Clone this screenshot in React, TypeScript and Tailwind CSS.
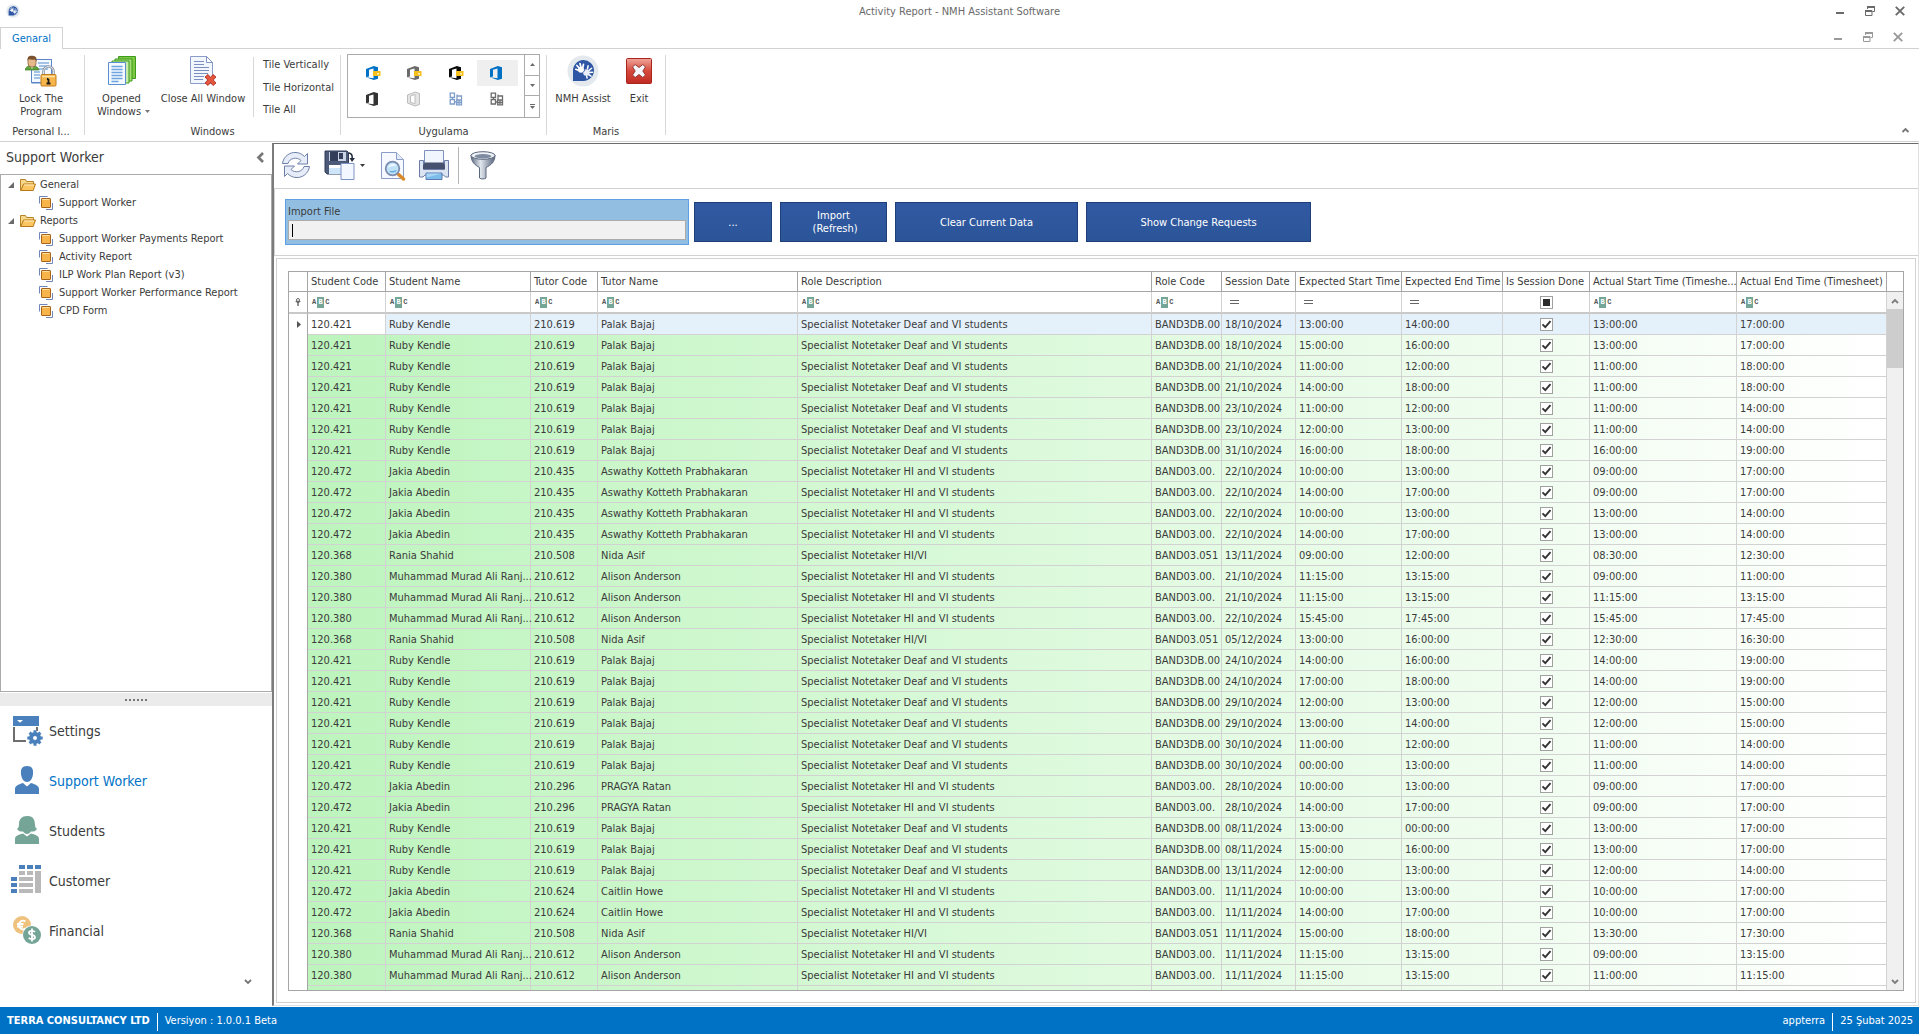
import React from "react";

type IconProps = { className?: string };

/* ---------- small window glyphs ---------- */

function AppLogo({ className }: IconProps) {
  return (
    <svg viewBox="0 0 32 32" className={className} aria-hidden="true">
      <circle cx="16" cy="16" r="15.5" fill="#e3e9ec" />
      <path d="M6 26V16a10.5 10.5 0 1 1 10.5 10Z" fill="#2e56a5" />
      <g stroke="#fff" strokeLinecap="round" fill="none">
        <path d="M12 15.500l-3.200-1.200M12.500 13.500l-2.600-3M14 12.500l-1-4M15.700 13l.8-3.700" strokeWidth="1.700" />
        <path d="M20.500 13.800l.6-3M22 15.500l2.600-2.200M22.300 17.500l3.200-.3M21.500 19.500l2.600 1.600M19.500 20.500l.6 2.500" strokeWidth="1.500" />
      </g>
      <circle cx="14" cy="14.800" r="3" fill="#fff" />
      <circle cx="19.300" cy="17.500" r="3.200" fill="#e9eef8" />
      <path d="M16.200 17.500l2-3" stroke="#2e56a5" strokeWidth=".8" />
    </svg>
  );
}

function Minimize() {
  return (
    <svg viewBox="0 0 10 10" className="size-2.5" aria-hidden="true">
      <path d="M1 7h8" stroke="currentColor" strokeWidth="2" />
    </svg>
  );
}

function Restore() {
  return (
    <svg viewBox="0 0 10 10" className="size-2.5" aria-hidden="true">
      <path d="M2.500 3V.500h7v5H7.500" fill="none" stroke="currentColor" />
      <path d="M2 1h8M0 5h7" stroke="currentColor" strokeWidth="2" />
      <path d="M.5 4.500h6.500v5H.5Z" fill="none" stroke="currentColor" />
    </svg>
  );
}

function Close() {
  return (
    <svg viewBox="0 0 10 10" className="size-2.5" aria-hidden="true">
      <path d="M.8.800l8.400 8.400M9.200.800L.8 9.200" stroke="currentColor" strokeWidth="1.900" />
    </svg>
  );
}

function Chevron({ className }: IconProps) {
  return (
    <svg viewBox="0 0 8 6" className={className} aria-hidden="true">
      <path d="M1 5l3-3 3 3" fill="none" stroke="currentColor" strokeWidth="1.800" />
    </svg>
  );
}

function Caret({ className }: IconProps) {
  return (
    <svg viewBox="0 0 5 3" className={className} aria-hidden="true">
      <path d="M0 0h5L2.500 3Z" fill="currentColor" />
    </svg>
  );
}

/* ---------- ribbon icons ---------- */

function LockProgramIcon() {
  return (
    <svg viewBox="0 0 32 32" className="size-8" aria-hidden="true">
      <path d="M6.500 4.500h20v14M6.500 14v14h10" fill="#fff" stroke="#5a86c8" />
      <path d="M6.500 4.500h20v23h-20Z" fill="#f4f9ff" stroke="#5a86c8" />
      <path d="M13 8h11M14 11h10M14 14h9M9 17h6M9 20h6M9 23h6" stroke="#87b0de" strokeWidth="1.300" />
      <path d="M0 15c1-4 4-4 6.500-4S13 11 14 15Z" fill="#5fa33c" stroke="#3e7a25" strokeWidth=".7" />
      <path d="M5 11l2 3 2-3Z" fill="#d7f0c6" />
      <rect x="3" y="2" width="8" height="10" rx="3.500" fill="#e6b98a" stroke="#7a5432" strokeWidth=".7" />
      <path d="M2.500 6C2 1 5 .5 7.500 .8 11 1 12 3 11.500 6.500L10 4.500C7 5 5 4.500 3.500 4Z" fill="#7b5230" />
      <path d="M18.500 20v-3.500a5 5 0 0 1 10 0V20" fill="none" stroke="#8d97a5" strokeWidth="2.600" />
      <path d="M18.500 20v-3.500a5 5 0 0 1 10 0V20" fill="none" stroke="#dfe5ec" strokeWidth="1" />
      <rect x="16" y="19.500" width="15" height="11.500" rx="1" fill="#f7b64c" stroke="#c07c1e" />
      <path d="M17 21.500h13" stroke="#ffe3a6" strokeWidth="1.500" />
      <path d="M23.500 24v4.500M21.500 28.500h4M22 24h1.500" stroke="#1b1b1b" strokeWidth="1.800" fill="none" />
    </svg>
  );
}

function OpenedWindowsIcon() {
  return (
    <svg viewBox="0 0 32 32" className="size-8" aria-hidden="true">
      <path d="M12.500 1.500h17v22h-17Z" fill="#7cc843" stroke="#3d9a1c" />
      <path d="M9 4h17v22H9Z" fill="#a5dc77" stroke="#3d9a1c" />
      <path d="M6 6h17v22H6Z" fill="#c9ecab" stroke="#3d9a1c" />
      <path d="M2.500 7.500h17v22h-17Z" fill="#f3f9ff" stroke="#5a8fd0" />
      <path d="M5.500 11.500h11M5.500 14.500h11M5.500 17.500h11M5.500 20.500h11M5.500 23.500h11M5.500 26.500h7" stroke="#6ea4df" strokeWidth="1.300" />
    </svg>
  );
}

function CloseAllIcon() {
  return (
    <svg viewBox="0 0 32 32" className="size-8" aria-hidden="true">
      <path d="M3.500 1.500h16l6 6v21h-22Z" fill="#f2f6fd" stroke="#8b9cc9" />
      <path d="M19.500 1.500l6 6h-6Z" fill="#fff" stroke="#7e92c6" />
      <path d="M7 6.500h10M7 9.500h10M7 12.500h15M7 15.500h15M7 18.500h14M7 21.500h10M7 24.500h9" stroke="#7d8fc0" strokeWidth="1.200" />
      <path d="M18 22l3-2.500 2.500 3 2.500-3L29 22l-2.800 3 2.800 3-3 2.500-2.500-3-2.500 3L18 28l2.800-3Z" fill="#e4573f" stroke="#b1301f" strokeWidth=".9" />
    </svg>
  );
}

function ExitIcon() {
  return (
    <svg viewBox="0 0 26 26" className="size-[26px]" aria-hidden="true">
      <defs>
        <linearGradient id="exitFill" x1="0" y1="0" x2="0" y2="1">
          <stop offset="0" stopColor="#f0a79c" />
          <stop offset=".5" stopColor="#d5493c" />
          <stop offset="1" stopColor="#c02a22" />
        </linearGradient>
      </defs>
      <rect x=".5" y=".5" width="25" height="25" rx="1" fill="url(#exitFill)" stroke="#a8251e" />
      <path d="M6.500 9l2.700-2.500L13 9.500l3.800-3L19.500 9l-2.700 4 2.700 4-2.700 2.500-3.800-3-3.800 3L6.500 17l2.700-4Z" fill="#f3f5fa" stroke="#8f2a26" strokeWidth=".9" />
    </svg>
  );
}

function OfficeMark({ color, badge, pale }: { color: string; badge?: boolean; pale?: boolean }) {
  return (
    <svg viewBox="0 0 16 16" className="size-4" aria-hidden="true">
      {pale ? (
        <path d="M1.500 4L9 1l4.500 1.500v11L9 15l-7.500-3Z M4.500 5v6.500L9 12.500v-9Z" fill="#e4e4e4" stroke="#b5b5b5" strokeWidth=".9" fillRule="evenodd" />
      ) : (
        <path d="M1 4L8.800 1 13 2.300v11.400L8.800 15 1 12.300l7.500 1V3.600L4 4.800v6.700L1 12.300Z" fill={color} />
      )}
      {badge && (
        <>
          <path d="M8 6h7.500v5H8Z" fill="#f8c01c" />
          <path d="M12 8h2v1.500h-2Z" fill="#fff3c4" />
        </>
      )}
    </svg>
  );
}

function TilesMark({ color }: { color: string }) {
  return (
    <svg viewBox="0 0 16 16" className="size-4" aria-hidden="true">
      <g fill="none" stroke={color} strokeWidth="1.300">
        <path d="M2.200 2.200h4.300v4.300H2.200ZM2.200 8.700h4.300v4.300H2.200ZM8.700 9h4.800v4.800H8.700ZM9 5h4.500v4H9ZM9 5V3.500" />
        <path d="M4.500 6.500v2.200M6.500 11H9M11 9v4.500M9 11.500h4.500" />
      </g>
    </svg>
  );
}

/* ---------- sidebar icons ---------- */

function FolderIcon() {
  return (
    <svg viewBox="0 0 16 14" className="h-3.5 w-4" aria-hidden="true">
      <path d="M.5 12.500V1.500h5l1 2h7v3" fill="#f7d78c" stroke="#b98325" />
      <path d="M.8 12.500L3.500 6h12l-2.300 6.500Z" fill="#fbc662" stroke="#b87718" />
      <path d="M4.200 7h9.800" stroke="#fff0c5" />
    </svg>
  );
}

function FormIcon() {
  return (
    <svg viewBox="0 0 14 14" className="size-3.5" aria-hidden="true">
      <path d="M.5 7.500v-7h8M13.500 7v6.500H7" fill="none" stroke="#6f86bd" />
      <rect x="2.500" y="2.500" width="9" height="9" rx=".5" fill="#f7b44b" stroke="#a9641c" />
      <path d="M3.500 3.500h7" stroke="#ffdf9e" />
    </svg>
  );
}

function SettingsIcon() {
  return (
    <svg viewBox="0 0 32 32" className="size-8" aria-hidden="true">
      <path d="M3 12v14h12M26 12v5" fill="none" stroke="#6e6e6e" strokeWidth="2" />
      <path d="M2 1h26v10H2Z" fill="#4a80bb" />
      <path d="M6 5h6L9 7.800Z" fill="#fff" />
      <circle cx="24" cy="23" r="7.500" fill="#fff" />
      <circle cx="24" cy="23" r="4" fill="none" stroke="#4a80bb" strokeWidth="4" />
      <path d="M24 15.300v3M24 27.700v3M16.300 23h3M28.700 23h3M18.600 17.600l2 2M27.400 26.400l2 2M29.400 17.600l-2 2M20.600 26.400l-2 2" stroke="#4a80bb" strokeWidth="3" />
    </svg>
  );
}

function PersonIcon() {
  return (
    <svg viewBox="0 0 32 32" className="size-8" aria-hidden="true">
      <path d="M16 1c5 0 6.500 3 6 8-.5 5-3 8-6 8s-5.500-3-6-8c-.5-5 1-8 6-8Z" fill="#4a80bb" />
      <path d="M4 29v-5c0-3 3-4.500 8-6l4 3.500L20 18c5 1.500 8 3 8 6v5Z" fill="#4a80bb" />
    </svg>
  );
}

function StudentIcon() {
  return (
    <svg viewBox="0 0 32 32" className="size-8" aria-hidden="true">
      <path d="M16 1c6-.5 8 4 8 9 0 2 1 3 2 4-2 3-4 2.500-6 2.500-1 1.500-2.500 2.500-4 2.500s-3-1-4-2.500c-2 0-4 .5-6-2.500 2-2 2-3 2-5 0-5 3-8 8-8Z" fill="#74a596" />
      <path d="M4 29v-5c0-3 3-4 8-5.500l4 3 4-3c5 1.500 8 2.500 8 5.500v5Z" fill="#74a596" />
    </svg>
  );
}

function CustomerIcon() {
  return (
    <svg viewBox="0 0 32 32" className="size-8" aria-hidden="true">
      <path d="M8 0h6v4H8ZM16 0h6v4h-6ZM24 0h6v4h-6ZM0 12h6v4H0ZM0 18h6v4H0ZM0 24h6v4H0Z" fill="#4a80bb" />
      <path d="M8 6h6v4H8ZM16 6h6v4h-6ZM8 12h14v4H8ZM8 18h14v4H8ZM8 24h14v4H8ZM24 6h6v22h-6Z" fill="#b9b9b9" />
    </svg>
  );
}

function FinancialIcon() {
  return (
    <svg viewBox="0 0 32 32" className="size-8" aria-hidden="true">
      <circle cx="11" cy="10" r="9" fill="#eec17c" />
      <path d="M14.500 6.500c-3.500-2-6.500 0-6.500 3.500s3 5.500 6.500 3.500M6 9h6.500M6 11.500h6" fill="none" stroke="#fff" strokeWidth="1.800" />
      <circle cx="21" cy="20" r="9.800" fill="#fff" />
      <circle cx="21" cy="20" r="9" fill="#74a596" />
      <path d="M24 17c-1-1.500-6-1.800-6 .7 0 2.700 6 1.700 6 4.500 0 2.500-5 2.500-6.200.6M21 13.500v13" fill="none" stroke="#fff" strokeWidth="1.800" />
    </svg>
  );
}

/* ---------- toolbar icons ---------- */

function RefreshIcon() {
  return (
    <svg viewBox="0 0 32 32" className="size-8" aria-hidden="true">
      <g fill="#e6edf8" stroke="#6f80a8" strokeWidth="1">
        <path d="M2.500 14.500c1-7 7-11.500 13.500-11 3.500.2 6.300 1.800 8.500 4l3-3v10.500H17.500l3.500-3.500C17 7.500 9.500 9 8 14.500Z" />
        <path d="M29.500 17.500c-1 7-7 11.500-13.500 11-3.500-.2-6.300-1.800-8.500-4l-3 3V17H14.500L11 20.500c4 4 11.500 2.500 13-3Z" />
      </g>
    </svg>
  );
}

function SaveIcon() {
  return (
    <svg viewBox="0 0 32 32" className="size-8" aria-hidden="true">
      <path d="M1 2h22l1.500 1.500V25H3l-2-2Z" fill="#4c5a78" stroke="#2f3b58" />
      <path d="M5 3h17v9H5Z" fill="#c9d3e6" />
      <path d="M6 3h8v9H6Z" fill="#333f5a" />
      <path d="M15 4h4v6h-4Z" fill="#333f5a" />
      <path d="M5 16h15v9H5Z" fill="#cfe6fa" />
      <path d="M5 16h15v3H5Z" fill="#fff" />
      <path d="M17 14.500h13v16H17Z" fill="#f3f7ff" stroke="#7f93c6" />
      <path d="M25 4c3 .5 3.500 3 3.200 6" fill="none" stroke="#222b3d" strokeWidth="1.600" />
      <path d="M25.500 9h5.500l-3 4Z" fill="#222b3d" />
    </svg>
  );
}

function PreviewIcon() {
  return (
    <svg viewBox="0 0 32 32" className="size-8" aria-hidden="true">
      <path d="M4.500 3.500h15l7 7v19h-22Z" fill="#f6f9ff" stroke="#8b9cc6" />
      <path d="M19.500 3.500v7h7" fill="#e3eaf7" stroke="#8b9cc6" />
      <path d="M21 25l5.500 5" stroke="#d98b2b" strokeWidth="3.400" strokeLinecap="round" />
      <circle cx="15.500" cy="19.500" r="6.800" fill="#bfe2f8" stroke="#7c8cae" strokeWidth="1.800" />
      <path d="M11 19a5 5 0 0 1 9-2c-3-.5-6 0-9 2Z" fill="#eef8ff" />
      <path d="M12 22a5 5 0 0 0 8-1c-3 1-5 1-8 1Z" fill="#5fabdf" />
    </svg>
  );
}

function PrintIcon() {
  return (
    <svg viewBox="0 0 32 32" className="size-8" aria-hidden="true">
      <path d="M1.500 11.500h4v9h21v-9h4V28h-3l-2-2H7l-2 2H1.500Z" fill="#dce4f2" stroke="#6c7ca6" />
      <path d="M6.500 1.500h19v13h-19Z" fill="#f1f5fd" stroke="#8091bb" />
      <path d="M5 17l1.500-3.500h19L27 17v3H5Z" fill="#45516e" />
      <path d="M8 24h16v6.500H8Z" fill="#7dbcea" stroke="#5b78b0" />
      <path d="M8.500 24.500h15l-15 4Z" fill="#a9d6f5" />
    </svg>
  );
}

function FunnelIcon() {
  return (
    <svg viewBox="0 0 32 32" className="size-8" aria-hidden="true">
      <defs>
        <linearGradient id="funnelFill" x1="0" y1="0" x2="1" y2="0">
          <stop offset="0" stopColor="#5d6a80" />
          <stop offset=".4" stopColor="#e1e7ee" />
          <stop offset="1" stopColor="#57637a" />
        </linearGradient>
      </defs>
      <path d="M4 6c0 7 4 10 8.500 12.500V29c1.500 1.300 5 1.300 6.500 0V18.500C24 16 28 13 28 6Z" fill="url(#funnelFill)" stroke="#5a667c" />
      <ellipse cx="16" cy="6.500" rx="12" ry="3.800" fill="#eef2f6" stroke="#5a667c" />
      <ellipse cx="16" cy="7.200" rx="8.500" ry="2.200" fill="#7e8ba0" />
    </svg>
  );
}

/* ---------- data ---------- */

const RUBY = ["120.421", "Ruby Kendle", "210.619", "Palak Bajaj", "Specialist Notetaker Deaf and VI students", "BAND3DB.00"];
const JAKIA = ["120.472", "Jakia Abedin", "210.435", "Aswathy Kotteth Prabhakaran", "Specialist Notetaker HI and VI students", "BAND03.00."];
const JAKIA_P = ["120.472", "Jakia Abedin", "210.296", "PRAGYA Ratan", "Specialist Notetaker HI and VI students", "BAND03.00."];
const JAKIA_C = ["120.472", "Jakia Abedin", "210.624", "Caitlin Howe", "Specialist Notetaker HI and VI students", "BAND03.00."];
const RANIA = ["120.368", "Rania Shahid", "210.508", "Nida Asif", "Specialist Notetaker HI/VI", "BAND03.051"];
const MURAD = ["120.380", "Muhammad Murad Ali Ranj...", "210.612", "Alison Anderson", "Specialist Notetaker HI and VI students", "BAND03.00."];
const BLANK = ["", "", "", "", "", ""];

const SESSIONS: [string[], string, string, string, string, string][] = [
  [RUBY, "18/10/2024", "13:00:00", "14:00:00", "13:00:00", "17:00:00"],
  [RUBY, "18/10/2024", "15:00:00", "16:00:00", "13:00:00", "17:00:00"],
  [RUBY, "21/10/2024", "11:00:00", "12:00:00", "11:00:00", "18:00:00"],
  [RUBY, "21/10/2024", "14:00:00", "18:00:00", "11:00:00", "18:00:00"],
  [RUBY, "23/10/2024", "11:00:00", "12:00:00", "11:00:00", "14:00:00"],
  [RUBY, "23/10/2024", "12:00:00", "13:00:00", "11:00:00", "14:00:00"],
  [RUBY, "31/10/2024", "16:00:00", "18:00:00", "16:00:00", "19:00:00"],
  [JAKIA, "22/10/2024", "10:00:00", "13:00:00", "09:00:00", "17:00:00"],
  [JAKIA, "22/10/2024", "14:00:00", "17:00:00", "09:00:00", "17:00:00"],
  [JAKIA, "22/10/2024", "10:00:00", "13:00:00", "13:00:00", "14:00:00"],
  [JAKIA, "22/10/2024", "14:00:00", "17:00:00", "13:00:00", "14:00:00"],
  [RANIA, "13/11/2024", "09:00:00", "12:00:00", "08:30:00", "12:30:00"],
  [MURAD, "21/10/2024", "11:15:00", "13:15:00", "09:00:00", "11:00:00"],
  [MURAD, "21/10/2024", "11:15:00", "13:15:00", "11:15:00", "13:15:00"],
  [MURAD, "22/10/2024", "15:45:00", "17:45:00", "15:45:00", "17:45:00"],
  [RANIA, "05/12/2024", "13:00:00", "16:00:00", "12:30:00", "16:30:00"],
  [RUBY, "24/10/2024", "14:00:00", "16:00:00", "14:00:00", "19:00:00"],
  [RUBY, "24/10/2024", "17:00:00", "18:00:00", "14:00:00", "19:00:00"],
  [RUBY, "29/10/2024", "12:00:00", "13:00:00", "12:00:00", "15:00:00"],
  [RUBY, "29/10/2024", "13:00:00", "14:00:00", "12:00:00", "15:00:00"],
  [RUBY, "30/10/2024", "11:00:00", "12:00:00", "11:00:00", "14:00:00"],
  [RUBY, "30/10/2024", "00:00:00", "13:00:00", "11:00:00", "14:00:00"],
  [JAKIA_P, "28/10/2024", "10:00:00", "13:00:00", "09:00:00", "17:00:00"],
  [JAKIA_P, "28/10/2024", "14:00:00", "17:00:00", "09:00:00", "17:00:00"],
  [RUBY, "08/11/2024", "13:00:00", "00:00:00", "13:00:00", "17:00:00"],
  [RUBY, "08/11/2024", "15:00:00", "16:00:00", "13:00:00", "17:00:00"],
  [RUBY, "13/11/2024", "12:00:00", "13:00:00", "12:00:00", "14:00:00"],
  [JAKIA_C, "11/11/2024", "10:00:00", "13:00:00", "10:00:00", "17:00:00"],
  [JAKIA_C, "11/11/2024", "14:00:00", "17:00:00", "10:00:00", "17:00:00"],
  [RANIA, "11/11/2024", "15:00:00", "18:00:00", "13:30:00", "17:30:00"],
  [MURAD, "11/11/2024", "11:15:00", "13:15:00", "09:00:00", "13:15:00"],
  [MURAD, "11/11/2024", "11:15:00", "13:15:00", "11:00:00", "11:15:00"],
  [BLANK, "", "", "", "", ""],
];

const COLUMNS: { title: string; width: string; filter: "text" | "equals" | "check" }[] = [
  { title: "Student Code", width: "w-[78px]", filter: "text" },
  { title: "Student Name", width: "w-[145px]", filter: "text" },
  { title: "Tutor Code", width: "w-[67px]", filter: "text" },
  { title: "Tutor Name", width: "w-[200px]", filter: "text" },
  { title: "Role Description", width: "w-auto", filter: "text" },
  { title: "Role Code", width: "w-[70px]", filter: "text" },
  { title: "Session Date", width: "w-[74px]", filter: "equals" },
  { title: "Expected Start Time", width: "w-[106px]", filter: "equals" },
  { title: "Expected End Time", width: "w-[101px]", filter: "equals" },
  { title: "Is Session Done", width: "w-[87px]", filter: "check" },
  { title: "Actual Start Time (Timeshe...", width: "w-[147px]", filter: "text" },
  { title: "Actual End Time (Timesheet)", width: "w-[150px]", filter: "text" },
];

/* ---------- title bar and ribbon ---------- */

function WindowButtons({ label }: { label: string }) {
  const button = "grid h-5 w-[30px] place-items-center";
  return (
    <div className="flex">
      <button aria-label={`Minimize ${label}`} className={button}><Minimize /></button>
      <button aria-label={`Restore ${label}`} className={button}><Restore /></button>
      <button aria-label={`Close ${label}`} className={button}><Close /></button>
    </div>
  );
}

function TitleBar() {
  return (
    <header className="grid h-[27px] grid-cols-[1fr_auto_1fr] items-start pt-px text-[#6a6a6a]">
      <AppLogo className="mt-[3px] ml-1.5 size-3.5" />
      <h1 className="pt-1 leading-[14px]">Activity Report - NMH Assistant Software</h1>
      <div className="flex justify-end pr-1"><WindowButtons label="application" /></div>
    </header>
  );
}

function TabStrip() {
  return (
    <div className="flex h-[22px] items-stretch border-b border-[#d2d2d2]">
      <button className="-mb-px w-[63px] border border-b-0 border-[#d2d2d2] bg-white pt-px text-[#0072c6]">Genaral</button>
      <div className="ml-auto pr-1.5 text-[#999]"><WindowButtons label="document" /></div>
    </div>
  );
}

function RibbonGroup({ caption, className, children }: { caption: string; className: string; children: React.ReactNode }) {
  return (
    <section aria-label={caption} className={`flex shrink-0 flex-col ${className}`}>
      <div className="flex flex-1 items-start">{children}</div>
      <h2 className="h-4 text-center leading-[14px]">{caption}</h2>
    </section>
  );
}

function RibbonSeparator() {
  return <div className="mt-[6px] h-20 w-px shrink-0 bg-[#d8d8d8]" />;
}

function BigButton({ icon, className, children }: { icon: React.ReactNode; className: string; children: React.ReactNode }) {
  return (
    <button className={`flex shrink-0 flex-col items-center leading-[13px] ${className}`}>
      <span className="mt-1.5 mb-[5px] grid h-8 place-items-center">{icon}</span>
      {children}
    </button>
  );
}

const SKINS: { name: string; mark: React.ReactNode; selected?: boolean }[] = [
  { name: "Colorful", mark: <OfficeMark color="#0072c6" badge /> },
  { name: "Dark gray", mark: <OfficeMark color="#6b6b6b" badge /> },
  { name: "Black", mark: <OfficeMark color="#0a0a0a" badge /> },
  { name: "White", mark: <OfficeMark color="#0072c6" />, selected: true },
  { name: "Dark", mark: <OfficeMark color="#333333" /> },
  { name: "Light gray", mark: <OfficeMark color="#b5b5b5" pale /> },
  { name: "Blue tiles", mark: <TilesMark color="#7d9cca" /> },
  { name: "Gray tiles", mark: <TilesMark color="#6b6b6b" /> },
];

function SkinGallery() {
  return (
    <div className="mt-[5px] ml-1.5 flex h-16 w-[193px] border border-[#ababab]">
      <div className="grid flex-1 grid-cols-4 content-start pt-[5px] pr-1.5 pl-1">
        {SKINS.map((skin) => (
          <button key={skin.name} aria-label={skin.name} className={`grid h-[26px] place-items-center ${skin.selected ? "bg-[#efefef]" : ""}`}>
            {skin.mark}
          </button>
        ))}
      </div>
      <div className="grid w-[15px] grid-rows-3 divide-y divide-[#ababab] border-l border-[#ababab] text-[#6a6a6a]">
        <button aria-label="Scroll up" className="grid place-items-center"><Caret className="h-[3px] w-[5px] rotate-180" /></button>
        <button aria-label="Scroll down" className="grid place-items-center"><Caret className="h-[3px] w-[5px]" /></button>
        <button aria-label="More" className="flex flex-col items-center justify-center gap-px">
          <span className="h-px w-[5px] bg-[#6a6a6a]" />
          <Caret className="h-[3px] w-[5px]" />
        </button>
      </div>
    </div>
  );
}

function Ribbon() {
  return (
    <div className="flex h-[93px] border-b border-[#d2d2d2]">
      <RibbonGroup caption="Personal I..." className="w-[84px] pr-0.5">
        <BigButton icon={<LockProgramIcon />} className="w-full">
          <span>Lock The<br />Program</span>
        </BigButton>
      </RibbonGroup>
      <RibbonSeparator />
      <RibbonGroup caption="Windows" className="w-[255px]">
        <BigButton icon={<OpenedWindowsIcon />} className="w-[73px]">
          <span>Opened</span>
          <span className="flex items-center gap-1 pl-1">Windows<Caret className="h-[3px] w-[5px] text-[#777]" /></span>
        </BigButton>
        <BigButton icon={<CloseAllIcon />} className="w-[90px]">Close All Window</BigButton>
        <div className="mt-2 ml-[5px] flex border-l border-[#d8d8d8] pl-[9px]">
          <div className="flex h-[60px] flex-col justify-between pt-px">
            <button className="text-left leading-[14px]">Tile Vertically</button>
            <button className="text-left leading-[14px]">Tile Horizontal</button>
            <button className="text-left leading-[14px]">Tile All</button>
          </div>
        </div>
      </RibbonGroup>
      <RibbonSeparator />
      <RibbonGroup caption="Uygulama" className="w-[205px]"><SkinGallery /></RibbonGroup>
      <RibbonSeparator />
      <RibbonGroup caption="Maris" className="w-[118px]">
        <BigButton icon={<AppLogo className="size-8" />} className="w-[72px]">NMH Assist</BigButton>
        <BigButton icon={<ExitIcon />} className="w-10">Exit</BigButton>
      </RibbonGroup>
      <RibbonSeparator />
      <button aria-label="Collapse ribbon" className="ml-auto self-end p-2 pr-[9px] text-[#777]"><Chevron className="h-1.5 w-[9px]" /></button>
    </div>
  );
}

/* ---------- sidebar ---------- */

const TREE = [
  { name: "General", items: ["Support Worker"] },
  {
    name: "Reports",
    items: ["Support Worker Payments Report", "Activity Report", "ILP Work Plan Report (v3)", "Support Worker Performance Report", "CPD Form"],
  },
];

const NAV = [
  { name: "Settings", icon: <SettingsIcon /> },
  { name: "Support Worker", icon: <PersonIcon />, active: true },
  { name: "Students", icon: <StudentIcon /> },
  { name: "Customer", icon: <CustomerIcon /> },
  { name: "Financial", icon: <FinancialIcon /> },
];

function Sidebar() {
  return (
    <aside className="flex w-[272px] shrink-0 flex-col">
      <div className="flex h-8 items-center justify-between pr-1 pb-0.5 pl-1.5">
        <h2 className="text-[14px]">Support Worker</h2>
        <button aria-label="Collapse panel" className="p-0.5 text-[#777]"><Chevron className="h-[9px] w-3 -rotate-90" /></button>
      </div>
      <ul className="min-h-0 flex-1 overflow-hidden border border-[#ababab] pt-px">
        {TREE.map((group) => (
          <li key={group.name}>
            <button className="flex h-[18px] items-center pl-[7px]">
              <svg viewBox="0 0 6 6" className="mr-1.5 size-1.5" aria-hidden="true"><path d="M6 0v6H0Z" fill="#6a6a6a" /></svg>
              <FolderIcon />
              <span className="pl-1">{group.name}</span>
            </button>
            <ul>
              {group.items.map((item) => (
                <li key={item}>
                  <a href="#" className="flex h-[18px] items-center gap-1.5 pl-[38px]"><FormIcon />{item}</a>
                </li>
              ))}
            </ul>
          </li>
        ))}
      </ul>
      <div className="mt-px flex h-[13px] shrink-0 items-center justify-center gap-0.5 bg-[#ebebeb]">
        {[0, 1, 2, 3, 4, 5].map((dot) => <span key={dot} className="size-0.5 bg-[#777]" />)}
      </div>
      <nav className="flex flex-col text-[14px]">
        {NAV.map((item) => (
          <a key={item.name} href="#" className={`flex h-[50px] items-center gap-1.5 pl-[11px] ${item.active ? "text-[#0072c6]" : ""}`}>
            {item.icon}{item.name}
          </a>
        ))}
      </nav>
      <button aria-label="More sections" className="mr-5 flex h-[50px] items-center self-end pt-0.5 text-[#777]">
        <Chevron className="h-1.5 w-2 rotate-180" />
      </button>
    </aside>
  );
}

/* ---------- content ---------- */

function Toolbar() {
  return (
    <div className="flex h-[45px] shrink-0 items-start border-b border-[#d2d2d2] pt-[3px] pl-1.5">
      <button aria-label="Refresh" className="mt-0.5"><RefreshIcon /></button>
      <button aria-label="Save as" className="mt-0.5 ml-3 flex items-center">
        <SaveIcon />
        <Caret className="ml-1 h-[3px] w-[5px]" />
      </button>
      <button aria-label="Preview" className="mt-0.5 ml-3"><PreviewIcon /></button>
      <button aria-label="Print" className="mt-0.5 ml-[9px]"><PrintIcon /></button>
      <span className="ml-2 h-[37px] w-px bg-[#b5b5b5]" />
      <button aria-label="Filter" className="mt-0.5 ml-2"><FunnelIcon /></button>
    </div>
  );
}

function ImportBar() {
  const button = "h-10 border border-[#1f3f78] bg-linear-to-b from-[#3159a3] to-[#2b5598] leading-[13px] text-white";
  return (
    <div className="flex h-[67px] shrink-0 items-start border-b border-l border-[#d2d2d2] pt-2.5 pl-2.5">
      <label className="block h-[46px] w-[404px] border border-[#5c9fe3] bg-[#92bfe1] px-0.5 pt-1">
        <span className="block h-4 pt-px leading-[14px]">Import File</span>
        <span className="flex h-5 items-center border border-[#ababab] bg-[#f1f1f1] pl-[3px]">
          <span className="h-[13px] w-px bg-black" />
          <input type="text" className="h-full min-w-0 flex-1 bg-transparent px-0.5 outline-none" />
        </span>
      </label>
      <button className={`mt-[3px] ml-[5px] w-[78px] ${button}`}>...</button>
      <button className={`mt-[3px] ml-2 w-[107px] ${button}`}>Import<br />&nbsp;(Refresh)</button>
      <button className={`mt-[3px] ml-2 w-[183px] ${button}`}>Clear Current Data</button>
      <button className={`mt-[3px] ml-2 w-[225px] ${button}`}>Show Change Requests</button>
    </div>
  );
}

function TextFilterMark() {
  return (
    <span className="flex h-[11px] items-center font-['Liberation_Mono'] text-[7px] leading-[11px] font-bold text-[#555]">
      A<span className="mx-px w-[7px] bg-[#74a596] text-center text-white">B</span>C
    </span>
  );
}

function CheckCell({ label }: { label: string }) {
  return (
    <label className="mx-auto grid size-[13px] place-items-center">
      <input type="checkbox" defaultChecked aria-label={label} className="size-[13px] appearance-none border border-[#a0a0a0] bg-white [grid-area:1/1]" />
      <svg viewBox="0 0 11 11" className="pointer-events-none size-[11px] [grid-area:1/1]" aria-hidden="true">
        <path d="M1.500 5.300l2.800 2.900 5.200-6" fill="none" stroke="#333" strokeWidth="1.900" />
      </svg>
    </label>
  );
}

function SessionTable() {
  return (
    <table className="w-full table-fixed border-separate border-spacing-0 leading-[14px] whitespace-nowrap">
      <colgroup>
        <col className="w-[19px]" />
        {COLUMNS.map((column) => <col key={column.title} className={column.width} />)}
      </colgroup>
      <thead>
        <tr>
          <th aria-label="Row marker" className="h-5 border-r border-b border-[#a6a6a6] p-0" />
          {COLUMNS.map((column) => (
            <th key={column.title} scope="col" className="h-5 border-r border-b border-[#a6a6a6] p-0 pl-[3px] text-left font-normal">
              {column.title}
            </th>
          ))}
        </tr>
        <tr>
          <td className="h-[22px] border-r border-b-2 border-r-[#a6a6a6] border-b-[#c9c9c9] p-0">
            <svg viewBox="0 0 6 8" className="mx-auto h-2 w-1.5" aria-hidden="true">
              <circle cx="3" cy="2" r="1.500" fill="#fff" stroke="#666" />
              <path d="M0 3h6L3.700 5v3H2.300V5Z" fill="#666" />
            </svg>
          </td>
          {COLUMNS.map((column) => (
            <td key={column.title} className="h-[22px] border-r border-b-2 border-r-[#d2d2d2] border-b-[#c9c9c9] p-0">
              {column.filter === "text" && <div className="pl-1"><TextFilterMark /></div>}
              {column.filter === "equals" && <div className="ml-2 h-1 w-[9px] border-y border-[#666]" />}
              {column.filter === "check" && (
                <label className="mx-auto grid size-[13px] place-items-center">
                  <input type="checkbox" aria-label="Filter by session done" className="size-[13px] appearance-none border border-[#a0a0a0] bg-white [grid-area:1/1]" />
                  <span className="pointer-events-none size-[7px] bg-[#2b2b2b] [grid-area:1/1]" />
                </label>
              )}
            </td>
          ))}
        </tr>
      </thead>
      <tbody>
        {SESSIONS.map(([person, date, expectedStart, expectedEnd, actualStart, actualEnd], row) => {
          const cell = "h-[21px] border-r border-b border-[#d2d2d2] p-0 pt-0.5 pl-[3px]";
          return (
            <tr key={row} className={row === 0 ? "bg-[#e4f0fa]" : "bg-linear-to-r from-[#bcf4bc] to-white"}>
              <td className="h-[21px] border-r border-[#a6a6a6] bg-white p-0">
                {row === 0 && (
                  <svg viewBox="0 0 4 7" className="ml-2 h-[7px] w-1" aria-hidden="true"><path d="M0 0l4 3.500L0 7Z" fill="#555" /></svg>
                )}
              </td>
              {person.map((value, index) => (
                <td key={index} className={`${cell} ${row === 0 && index === 0 ? "bg-white" : ""}`}>{value}</td>
              ))}
              <td className={cell}>{date}</td>
              <td className={cell}>{expectedStart}</td>
              <td className={cell}>{expectedEnd}</td>
              <td className="h-[21px] border-r border-b border-[#d2d2d2] p-0"><CheckCell label={`Session ${row + 1} done`} /></td>
              <td className={cell}>{actualStart}</td>
              <td className={cell}>{actualEnd}</td>
            </tr>
          );
        })}
      </tbody>
    </table>
  );
}

function ScrollTrack() {
  return (
    <div className="flex w-4 shrink-0 flex-col">
      <div className="h-5 shrink-0 border-b border-[#a6a6a6]" />
      <div className="flex flex-1 flex-col bg-[#f0f0f0] text-[#7d7d7d]">
        <button aria-label="Scroll rows up" className="grid h-[17px] place-items-center"><Chevron className="h-1.5 w-2" /></button>
        <div className="h-[59px] bg-[#cdcdcd]" />
        <button aria-label="Scroll rows down" className="mt-auto grid h-[17px] place-items-center"><Chevron className="h-1.5 w-2 rotate-180" /></button>
      </div>
    </div>
  );
}

function Content() {
  return (
    <main className="mt-px flex min-w-0 flex-1 flex-col border-t border-r border-b border-l-2 border-t-[#6b6b6b] border-r-[#e0e0e0] border-b-[#e0e0e0] border-l-[#7c7c7c]">
      <Toolbar />
      <ImportBar />
      <div className="m-0.5 flex min-h-0 flex-1 border border-[#d2d2d2] pt-3 pr-[11px] pb-[11px] pl-[11px]">
        <div className="flex min-h-0 min-w-0 flex-1 overflow-hidden border border-[#a6a6a6]">
          <div className="min-w-0 flex-1"><SessionTable /></div>
          <ScrollTrack />
        </div>
      </div>
    </main>
  );
}

function StatusBar() {
  return (
    <footer className="flex h-[27px] shrink-0 items-center gap-[7px] bg-[#0072c6] pt-0.5 pr-1.5 pl-[7px] text-white">
      <strong>TERRA CONSULTANCY LTD</strong>
      <span className="h-[18px] w-px bg-white" />
      <span>Versiyon : 1.0.0.1 Beta</span>
      <span className="ml-auto">appterra</span>
      <span className="h-[18px] w-px bg-white" />
      <span>25 Şubat 2025</span>
    </footer>
  );
}

export default function App() {
  return (
    <div className="flex h-screen flex-col overflow-hidden bg-white font-['DejaVu_Sans_Condensed','DejaVu_Sans',sans-serif] text-[11px] text-[#3b3b3b]">
      <TitleBar />
      <TabStrip />
      <Ribbon />
      <div className="flex min-h-0 flex-1">
        <Sidebar />
        <Content />
      </div>
      <div className="h-px shrink-0" />
      <StatusBar />
    </div>
  );
}
